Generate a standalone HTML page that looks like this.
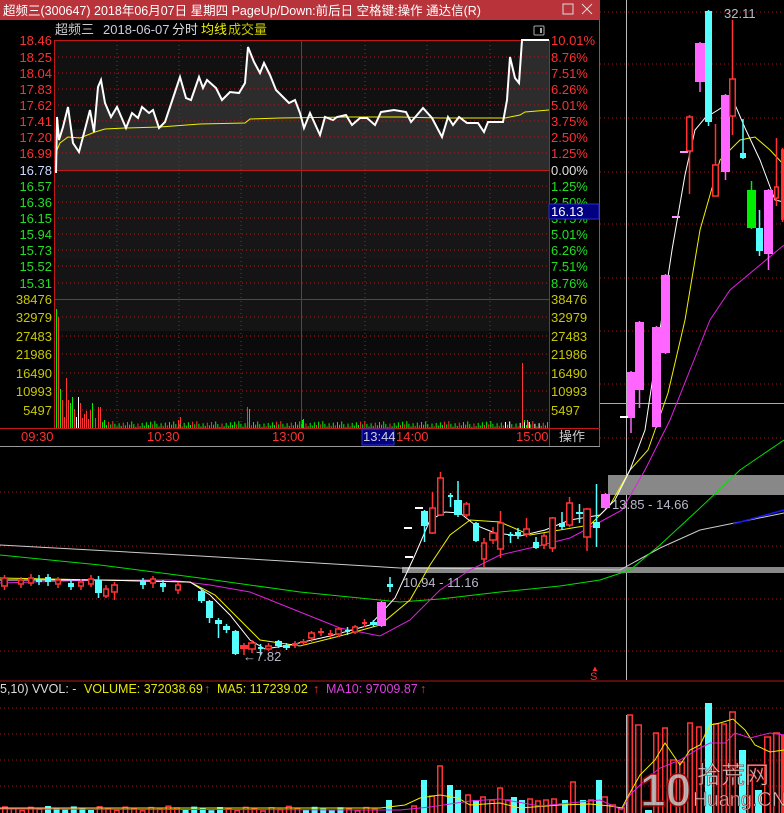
<!DOCTYPE html>
<html><head><meta charset="utf-8"><style>
html,body{margin:0;padding:0;background:#000;width:784px;height:813px;overflow:hidden}
svg{display:block;font-family:"Liberation Sans","Noto Sans CJK SC",sans-serif}
</style></head><body>
<svg id="s" width="784" height="813" viewBox="0 0 784 813" xmlns="http://www.w3.org/2000/svg">
<rect width="784" height="813" fill="#000"/>
<g stroke="#a01818" stroke-dasharray="1,3" stroke-width="1">
<line x1="0" y1="12" x2="784" y2="12"/><line x1="0" y1="64" x2="784" y2="64"/><line x1="0" y1="118" x2="784" y2="118"/><line x1="0" y1="172" x2="784" y2="172"/><line x1="0" y1="224" x2="784" y2="224"/><line x1="0" y1="278" x2="784" y2="278"/><line x1="0" y1="331" x2="784" y2="331"/><line x1="0" y1="384" x2="784" y2="384"/><line x1="0" y1="438" x2="784" y2="438"/><line x1="0" y1="492" x2="784" y2="492"/><line x1="0" y1="546" x2="784" y2="546"/><line x1="0" y1="599" x2="784" y2="599"/><line x1="0" y1="651" x2="784" y2="651"/>
<line x1="0" y1="708" x2="784" y2="708"/><line x1="0" y1="734" x2="784" y2="734"/><line x1="0" y1="760" x2="784" y2="760"/><line x1="0" y1="786" x2="784" y2="786"/>
</g>
<line x1="0" y1="681" x2="784" y2="681" stroke="#b01818"/>
<line x1="626.5" y1="0" x2="626.5" y2="680" stroke="#bbb"/>
<line x1="626.5" y1="715" x2="626.5" y2="813" stroke="#bbb"/>
<line x1="600" y1="403.5" x2="784" y2="403.5" stroke="#aaa"/>
<rect x="608" y="475" width="176" height="20" fill="#888"/>
<rect x="402" y="567" width="382" height="6" fill="#888"/>
<g fill="none" stroke-width="1">
<polyline stroke="#ccc" points="0,545 200,556 400,568 620,570 660,548 700,530 784,513"/>
<polyline stroke="#1a1aff" stroke-width="1.5" points="733,524 784,510"/>
<polyline stroke="#00e000" points="0,555 100,565 200,578 300,592 400,602 440,599 500,592 560,586 600,580 630,570 660,545 700,508 740,470 784,440"/>
<polyline stroke="#e020e0" points="0,583 100,580 170,580 210,585 250,592 300,612 340,628 380,636 410,620 440,590 470,570 500,555 530,548 570,538 600,522 622,510 645,470 670,420 690,370 710,320 730,290 760,265 784,245"/>
<polyline stroke="#f0f000" points="0,578 100,580 190,582 215,595 240,620 260,640 300,646 340,636 380,625 410,600 430,565 450,535 470,520 500,522 530,535 560,530 590,525 610,505 630,470 648,450 668,393 685,320 700,230 720,160 740,140 755,137 770,150 784,165"/>
<polyline stroke="#fff" points="0,580 100,580 190,582 210,595 230,615 250,640 265,649 290,645 330,636 370,625 395,598 415,555 430,520 445,512 460,513 475,525 495,533 520,536 545,530 570,520 600,515 615,500 630,470 645,430 660,330 672,250 685,175 695,130 705,118 718,110 733,100 745,128 760,160 775,200 784,202"/>
</g>
<g id="c"></g>
<g font-size="13" fill="#b8b8c8">
<text x="403" y="587">10.94 - 11.16</text>
<text x="612" y="509">13.85 - 14.66</text>
<text x="724" y="18">32.11</text>
<text x="243" y="661">←7.82</text>
</g>
<text x="590" y="680" fill="#ff3030" font-size="11">S</text>
<text x="591" y="671" fill="#ff3030" font-size="8">▲</text>
<g font-size="12.5">
<text x="0" y="693" fill="#ddd">5,10) VVOL: -</text>
<text x="84" y="693" fill="#e8e800">VOLUME: 372038.69</text><text x="204" y="693" fill="#ff3030">↑</text>
<text x="217" y="693" fill="#e8e800">MA5: 117239.02</text><text x="313" y="693" fill="#ff3030">↑</text>
<text x="326" y="693" fill="#e040e0">MA10: 97009.87</text><text x="420" y="693" fill="#ff3030">↑</text>
</g>
<g id="v"></g>
<g fill="none" stroke-width="1">
<polyline stroke="#f0f000" points="0,808 380,808 405,805 420,798 440,795 458,798 470,805 500,803 520,808 560,805 590,804 610,806 622,808 626,800 640,775 655,760 665,743 680,765 690,750 700,745 710,725 720,723 733,719 745,730 755,745 770,752 784,750"/>
<polyline stroke="#e020e0" points="0,809 400,810 430,807 470,801 500,799 540,806 600,800 622,810 630,795 645,780 660,768 680,760 700,748 710,743 725,743 735,733 750,738 770,733 784,735"/>
</g>
<g opacity="0.85">
<text x="640" y="806" font-size="46" font-weight="bold" fill="#c8c8c8" stroke="#a00" stroke-width="1.5">10</text>
<text x="697" y="783" font-size="24" fill="#ddd" stroke="#900" stroke-width="0.6">拾荒网</text>
<text x="693" y="806" font-size="20" fill="#ddd" stroke="#900" stroke-width="0.6">Huang.CN</text>
</g>

<rect x="0" y="0" width="600" height="447" fill="#000"/>
<rect x="0" y="0" width="600" height="20" fill="#b9333b"/>
<text x="3" y="15" font-size="12.5" fill="#fff">超频三(300647) 2018年06月07日 星期四 PageUp/Down:前后日 空格键:操作 通达信(R)</text>
<rect x="563" y="4" width="10" height="10" fill="none" stroke="#ddd"/>
<path d="M582 4 L592 14 M592 4 L582 14" stroke="#ddd"/>
<line x1="599.5" y1="20" x2="599.5" y2="447" stroke="#666"/>
<text x="55" y="34" font-size="13" fill="#ccc">超频三</text>
<text x="103" y="34" font-size="13" fill="#ccd">2018-06-07</text>
<text x="172" y="34" font-size="13" fill="#ddd">分时</text>
<text x="201" y="34" font-size="13" fill="#f0f000">均线</text>
<text x="228" y="34" font-size="13" fill="#c8c800">成交量</text>
<rect x="534" y="26" width="10" height="9" rx="1" fill="none" stroke="#aaa"/>
<rect x="540" y="28" width="2" height="5" fill="#aaa"/>
<rect x="54" y="41" width="495" height="129" fill="#111"/>
<rect x="54" y="129" width="495" height="41" fill="#1c1c1c"/>
<rect x="54" y="170" width="495" height="89" fill="#161616"/>
<rect x="54" y="259" width="495" height="40" fill="#141414"/>
<rect x="54" y="299" width="495" height="32" fill="#141414"/>
<rect x="54" y="331" width="495" height="97" fill="#0b0b0b"/>
<path id="fill" fill="#2c2c2c" d=""/>
<g stroke="#b01818" stroke-dasharray="1,3">
<line x1="54" y1="57" x2="549" y2="57"/><line x1="54" y1="73" x2="549" y2="73"/><line x1="54" y1="89" x2="549" y2="89"/><line x1="54" y1="105" x2="549" y2="105"/><line x1="54" y1="121" x2="549" y2="121"/><line x1="54" y1="137" x2="549" y2="137"/><line x1="54" y1="153" x2="549" y2="153"/><line x1="54" y1="186" x2="549" y2="186"/><line x1="54" y1="202" x2="549" y2="202"/><line x1="54" y1="218" x2="549" y2="218"/><line x1="54" y1="234" x2="549" y2="234"/><line x1="54" y1="250" x2="549" y2="250"/><line x1="54" y1="266" x2="549" y2="266"/><line x1="54" y1="283" x2="549" y2="283"/>
<line x1="54" y1="317" x2="549" y2="317"/><line x1="54" y1="336" x2="549" y2="336"/><line x1="54" y1="354" x2="549" y2="354"/><line x1="54" y1="373" x2="549" y2="373"/><line x1="54" y1="391" x2="549" y2="391"/><line x1="54" y1="410" x2="549" y2="410"/>
<line x1="117" y1="41" x2="117" y2="428"/><line x1="179" y1="41" x2="179" y2="428"/><line x1="241" y1="41" x2="241" y2="428"/><line x1="365" y1="41" x2="365" y2="428"/><line x1="427" y1="41" x2="427" y2="428"/><line x1="490" y1="41" x2="490" y2="428"/>
</g>
<g stroke="#c01818" fill="none">
<rect x="54.5" y="40.5" width="495" height="388"/>
<line x1="301.5" y1="41" x2="301.5" y2="428"/>
<line x1="54" y1="170.5" x2="549" y2="170.5"/>
<line x1="54" y1="299.5" x2="549" y2="299.5"/>
<line x1="0" y1="428.5" x2="600" y2="428.5"/>
</g>
<polyline id="avg" fill="none" stroke="#f0f000" points="56,160 57,150 60,143 68,137 80,138 95,132 105,129 125,128 160,127 200,124 245,123 250,119 280,118 350,117 400,117 440,118 505,118 520,115 525,112 549,110"/>
<polyline id="pr" fill="none" stroke="#fff" stroke-width="2" points=""/>
<g id="iv"></g>
<g font-size="13" text-anchor="end">
<g fill="#ff3030"><text x="52" y="45">18.46</text><text x="52" y="62">18.25</text><text x="52" y="78">18.04</text><text x="52" y="94">17.83</text><text x="52" y="110">17.62</text><text x="52" y="126">17.41</text><text x="52" y="142">17.20</text><text x="52" y="158">16.99</text></g>
<text x="52" y="175" fill="#ccd8ff">16.78</text>
<g fill="#20e020"><text x="52" y="191">16.57</text><text x="52" y="207">16.36</text><text x="52" y="223">16.15</text><text x="52" y="239">15.94</text><text x="52" y="255">15.73</text><text x="52" y="271">15.52</text><text x="52" y="288">15.31</text></g>
<g fill="#c8c800"><text x="52" y="304">38476</text><text x="52" y="322">32979</text><text x="52" y="341">27483</text><text x="52" y="359">21986</text><text x="52" y="378">16490</text><text x="52" y="396">10993</text><text x="52" y="415">5497</text></g>
</g>
<g font-size="13">
<g fill="#ff3030"><text x="551" y="45">10.01%</text><text x="551" y="62">8.76%</text><text x="551" y="78">7.51%</text><text x="551" y="94">6.26%</text><text x="551" y="110">5.01%</text><text x="551" y="126">3.75%</text><text x="551" y="142">2.50%</text><text x="551" y="158">1.25%</text></g>
<text x="551" y="175" fill="#ddd">0.00%</text>
<g fill="#20e020"><text x="551" y="191">1.25%</text><text x="551" y="207">2.50%</text><text x="551" y="223">3.75%</text><text x="551" y="239">5.01%</text><text x="551" y="255">6.26%</text><text x="551" y="271">7.51%</text><text x="551" y="288">8.76%</text></g>
<g fill="#c8c800"><text x="551" y="304">38476</text><text x="551" y="322">32979</text><text x="551" y="341">27483</text><text x="551" y="359">21986</text><text x="551" y="378">16490</text><text x="551" y="396">10993</text><text x="551" y="415">5497</text></g>
</g>
<rect x="549" y="204" width="50" height="15" fill="#000080" stroke="#3030c0"/>
<text x="551" y="216" font-size="13" fill="#fff">16.13</text>
<g font-size="13" fill="#ff3030">
<text x="21" y="441">09:30</text><text x="147" y="441">10:30</text><text x="272" y="441">13:00</text><text x="396" y="441">14:00</text><text x="516" y="441">15:00</text>
</g>
<rect x="362" y="429" width="32" height="16" fill="#000080" stroke="#3030c0"/>
<text x="363" y="441" font-size="13" fill="#ccd">13:44</text>
<line x1="549.5" y1="428" x2="549.5" y2="446" stroke="#c01818"/>
<text x="559" y="441" font-size="13" fill="#ccc">操作</text>
<line x1="0" y1="446.5" x2="600" y2="446.5" stroke="#999"/>
</svg>
<script>
var NS="http://www.w3.org/2000/svg";
function el(p,t,a){var e=document.createElementNS(NS,t);for(var k in a)e.setAttribute(k,a[k]);p.appendChild(e);return e;}
var C=document.getElementById("c");
var R="#ff3333",M="#ff66ff",Y="#55ffff",G="#00ee00";
var K=[
[95,102,580,593,576,598,"c"],[103,109,589,596,585,598,"h"],[111,118,585,592,582,600,"h"],[1,8,578,586,575,590,"h"],[18,24,580,584,577,588,"h"],[28,34,578,583,574,586,"h"],[36,42,579,582,575,585,"c"],[45,51,577,582,574,586,"c"],[55,61,580,584,577,588,"h"],[68,74,583,587,579,590,"c"],[78,84,582,586,579,590,"h"],[88,94,579,584,575,587,"h"],[140,146,581,585,578,589,"c"],[150,156,579,583,576,588,"h"],[160,166,583,587,580,592,"c"],[175,181,585,590,582,594,"h"],
[198,205,591,601,588,603,"c"],[206,213,601,618,600,623,"c"],[215,222,620,624,618,638,"c"],[223,230,626,630,624,633,"c"],[232,239,631,654,630,655,"c"],[240,248,645,649,643,655,"r"],[248,256,643,649,640,653,"h"],[258,263,647,649,644,655,"c"],[265,272,646,649,643,651,"h"],[275,282,641,646,640,648,"c"],[283,290,645,648,643,650,"c"],[292,298,643,646,641,648,"r"],[300,307,641,643,639,646,"r"],[308,315,633,638,631,642,"h"],[318,324,631,633,628,636,"r"],[328,333,633,635,630,638,"r"],[335,342,629,634,627,637,"h"],[345,350,630,632,627,635,"c"],[352,358,627,632,625,634,"h"],[362,367,622,624,619,627,"r"],[370,377,622,625,620,627,"c"],[377,386,602,626,601,627,"m"],[387,393,584,587,577,592,"c"],
[421,428,511,526,510,542,"c"],[429,436,508,533,492,534,"h"],[437,444,478,515,472,516,"h"],[448,453,495,497,493,507,"c"],[454,462,500,515,481,517,"c"],[463,470,504,515,502,517,"h"],[473,479,523,541,522,542,"c"],[481,487,543,559,538,567,"h"],[489,497,533,540,527,544,"h"],[497,504,523,549,511,558,"h"],[508,513,534,536,532,543,"c"],[515,521,532,536,528,539,"c"],[523,530,529,534,518,537,"h"],[533,539,542,548,537,549,"c"],[541,547,536,545,533,549,"h"],[549,556,518,548,517,552,"h"],[559,565,523,527,512,530,"c"],[566,573,503,525,497,527,"h"],[576,583,512,514,504,523,"c"],[583,591,509,537,508,551,"h"],[593,600,522,528,484,547,"c"],[601,610,494,508,493,509,"m"],
[627,635,372,418,371,433,"m"],[635,644,322,390,321,408,"m"],[652,661,327,427,326,428,"m"],[661,670,275,353,274,354,"m"],[686,693,117,151,115,194,"h"],[695,705,43,82,42,92,"m"],[705,712,11,122,10,126,"c"],[712,719,165,196,124,196,"h"],[721,730,95,172,94,180,"m"],[729,736,79,116,20,135,"h"],[740,746,153,158,119,159,"c"],[747,756,190,228,181,229,"g"],[756,763,228,251,210,256,"c"],[764,773,190,254,189,270,"m"],[774,779,187,198,138,206,"h"],[781,784,150,219,148,222,"h"]
];
K.forEach(function(k){var col=k[6]=="c"?Y:k[6]=="m"?M:k[6]=="g"?G:R;var cx=(k[0]+k[1])/2;
el(C,"line",{x1:cx,y1:k[4],x2:cx,y2:k[5],stroke:col,"stroke-width":1.5});
if(k[6]=="h"){el(C,"rect",{x:k[0]+0.75,y:k[2],width:k[1]-k[0]-1.5,height:Math.max(1,k[3]-k[2]),fill:"#000",stroke:col,"stroke-width":1.5});}
else el(C,"rect",{x:k[0],y:k[2],width:k[1]-k[0],height:Math.max(2,k[3]-k[2]),fill:col});});
[[404,527],[405,556],[415,507],[620,416],[672,216],[680,151]].forEach(function(p){el(C,"rect",{x:p[0],y:p[1],width:8,height:2,fill:p[0]>660?"#ff99ff":"#fff"});});
var V=document.getElementById("v");
var VB=[[601,608,797,"h"],[609,616,805,"h"],[618,625,808,"h"],[627,633,715,"h"],[635,642,725,"h"],[645,652,810,"c"],[653,659,733,"h"],[662,668,728,"h"],[670,677,760,"h"],[679,685,762,"h"],[687,693,723,"h"],[696,702,727,"h"],[705,712,703,"c"],[713,719,724,"h"],[721,727,724,"h"],[729,736,712,"h"],[739,746,750,"c"],[747,753,775,"h"],[755,762,790,"c"],[764,771,737,"h"],[773,780,733,"h"],[781,784,735,"h"],
[421,427,780,"c"],[429,435,796,"h"],[437,443,766,"h"],[447,453,785,"c"],[455,461,790,"c"],[465,471,795,"h"],[473,479,800,"c"],[480,486,797,"h"],[489,495,800,"h"],[497,503,788,"h"],[505,511,800,"h"],[511,517,797,"c"],[519,525,800,"c"],[527,533,799,"h"],[535,541,801,"h"],[543,549,800,"h"],[551,557,799,"h"],[562,568,800,"c"],[570,576,782,"h"],[580,586,800,"c"],[588,594,800,"h"],[596,602,780,"c"],[386,392,800,"c"],[411,417,806,"h"]];
for(var x=2;x<380;x+=8.6){var c=(Math.floor(x*7)%3==0);VB.push([x,x+6,806+((x*13)%5),c?"c":"h"]);}
VB.forEach(function(b){var col=b[3]=="c"?Y:R;if(b[3]=="c")el(V,"rect",{x:b[0],y:b[2],width:b[1]-b[0],height:813-b[2],fill:col});else el(V,"rect",{x:b[0]+0.75,y:b[2],width:b[1]-b[0]-1.5,height:815-b[2],fill:"none",stroke:col,"stroke-width":1.5});});
var P="56,173 57,117 59,140 63,127 68,107 73,143 79,152 84,133 90,110 94,132 98,87 101,80 105,103 111,117 117,107 126,128 132,113 138,118 142,107 149,113 153,110 159,128 165,122 170,107 180,77 186,98 191,100 199,77 203,88 207,80 216,88 222,100 230,92 239,93 245,83 248,47 254,62 260,73 264,63 270,75 276,90 283,97 289,103 295,100 300,113 304,128 310,113 320,135 325,117 333,120 337,117 346,115 352,125 360,118 367,118 375,125 381,112 394,110 406,112 411,122 423,108 432,118 442,137 448,117 453,125 459,117 467,123 478,123 484,132 488,122 503,122 507,100 510,57 515,78 519,83 522,40 549,40";
document.getElementById("pr").setAttribute("points",P);
document.getElementById("fill").setAttribute("d","M56,170 L"+P.split(" ").join(" L")+" L549,170 Z");
var IV=document.getElementById("iv");
var IB=[[56,309,G],[58,317,R],[60,389,G],[62,400,R],[64,417,R],[66,378,R],[68,400,R],[70,403,G],[72,397,G],[74,409,R],[76,417,"#fff"],[78,397,"#fff"],[80,403,R],[82,418,R],[84,414,R],[86,411,R],[88,419,R],[90,410,R],[92,403,G],[95,418,R],[98,407,R],[100,407,R],[102,422,G],[104,420,G],[178,420,R],[180,417,R],[247,407,R],[249,409,G],[302,420,G],[303,419,G],[522,363,R],[527,420,G],[524,420,G],[529,422,"#fff"]];
for(var x=106;x<548;x+=2.1){var t=Math.floor(x*3)%4;IB.push([x,421+((x*7)%6),t==0?R:(t==3&&x>495?"#fff":G)]);}
IB.forEach(function(b){el(IV,"line",{x1:b[0]+0.5,y1:b[1],x2:b[0]+0.5,y2:428,stroke:b[2],"stroke-width":1});});
</script>
</body></html>
